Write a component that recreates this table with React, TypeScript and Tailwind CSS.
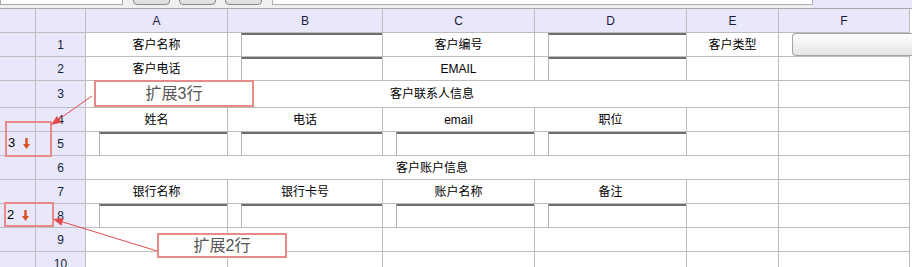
import React from 'react';

const line = 'border-r border-b border-[#bdbdbd]';

function Frozen() {
  return <div className={`${line} bg-[#e8e8fa]`} />;
}

function RowNum({ n }: { n: number }) {
  return (
    <div className={`${line} bg-[#e8e8fa] flex items-center justify-center text-[12px] text-[#1a1a3a]`}>
      {n}
    </div>
  );
}

function Txt({ children, span }: { children?: React.ReactNode; span?: boolean }) {
  return (
    <div className={`${line} bg-white flex items-center justify-center text-[12px] text-black ${span ? 'col-span-5' : ''}`}>
      {children}
    </div>
  );
}

function Inp() {
  return (
    <div className={`${line} bg-white pl-[13px]`}>
      <div className="h-full bg-white border-t-2 border-t-[#6e6e6e] border-l border-l-[#b5b5b5]" />
    </div>
  );
}

function SelectBtn() {
  return (
    <div className={`${line} bg-white pl-[13px] overflow-visible`}>
      <div className="h-full w-[140px] rounded-l-[4px] border border-r-0 border-[#a3a3a3] bg-linear-to-b from-white to-[#e4e4e4]" />
    </div>
  );
}

function DownArrow() {
  return (
    <svg width="7" height="11" viewBox="0 0 7 11">
      <rect x="2.3" y="0" width="2.4" height="7" fill="#d4521c" />
      <polygon points="0,6 7,6 3.5,11" fill="#d4521c" />
    </svg>
  );
}

export default function App() {
  const heads = ['A', 'B', 'C', 'D', 'E', 'F'];

  return (
    <div
      className="relative w-[912px] h-[267px] overflow-hidden bg-white"
      style={{ fontFamily: '"Liberation Sans", "Noto Sans CJK SC", sans-serif' }}
    >
      {/* toolbar strip, mostly scrolled out of view */}
      <div className="h-[8px] overflow-hidden bg-[#f0f0f0]">
        <div className="-mt-[15px] h-[23px] flex items-start">
          <div className="h-[20px] w-[123px] bg-white border border-[#a8a8a8]" />
          <div className="h-[20px] w-[37px] ml-[10px] rounded-[4px] border border-[#8a8a8a] bg-linear-to-b from-white to-[#dcdcdc]" />
          <div className="h-[20px] w-[37px] ml-[9px] rounded-[4px] border border-[#8a8a8a] bg-linear-to-b from-white to-[#dcdcdc]" />
          <div className="h-[20px] w-[37px] ml-[9px] rounded-[4px] border border-[#8a8a8a] bg-linear-to-b from-white to-[#dcdcdc]" />
          <div className="h-[20px] w-[541px] ml-[10px] bg-white border border-[#b0b0b0]" />
          <div className="h-full flex-1 bg-[#e8e8fa]" />
        </div>
      </div>

      <div className="grid grid-cols-[36px_50px_142px_155px_152px_152px_92px_131px] grid-rows-[24px_24px_24px_27px_24px_24px_24px_24px_24px_24px_24px] border-t border-[#a9a9a9]">
        {/* header */}
        <Frozen />
        <div className={`${line} bg-[#e8e8fa]`} />
        {heads.map((h) => (
          <div key={h} className={`${line} bg-[#e8e8fa] flex items-center justify-center text-[12px] text-[#1a1a3a]`}>
            {h}
          </div>
        ))}

        {/* 1 */}
        <Frozen />
        <RowNum n={1} />
        <Txt>客户名称</Txt>
        <Inp />
        <Txt>客户编号</Txt>
        <Inp />
        <Txt>客户类型</Txt>
        <SelectBtn />

        {/* 2 */}
        <Frozen />
        <RowNum n={2} />
        <Txt>客户电话</Txt>
        <Inp />
        <Txt>EMAIL</Txt>
        <Inp />
        <Txt />
        <Txt />

        {/* 3 */}
        <Frozen />
        <RowNum n={3} />
        <Txt span>客户联系人信息</Txt>
        <Txt />

        {/* 4 */}
        <Frozen />
        <RowNum n={4} />
        <Txt>姓名</Txt>
        <Txt>电话</Txt>
        <Txt>email</Txt>
        <Txt>职位</Txt>
        <Txt />
        <Txt />

        {/* 5 */}
        <Frozen />
        <RowNum n={5} />
        <Inp />
        <Inp />
        <Inp />
        <Inp />
        <Txt />
        <Txt />

        {/* 6 */}
        <Frozen />
        <RowNum n={6} />
        <Txt span>客户账户信息</Txt>
        <Txt />

        {/* 7 */}
        <Frozen />
        <RowNum n={7} />
        <Txt>银行名称</Txt>
        <Txt>银行卡号</Txt>
        <Txt>账户名称</Txt>
        <Txt>备注</Txt>
        <Txt />
        <Txt />

        {/* 8 */}
        <Frozen />
        <RowNum n={8} />
        <Inp />
        <Inp />
        <Inp />
        <Inp />
        <Txt />
        <Txt />

        {/* 9, 10 */}
        {[9, 10].map((n) => (
          <React.Fragment key={n}>
            <Frozen />
            <RowNum n={n} />
            <Txt />
            <Txt />
            <Txt />
            <Txt />
            <Txt />
            <Txt />
          </React.Fragment>
        ))}
      </div>

      {/* annotations */}
      <div className="absolute left-[94px] top-[80px] w-[160px] h-[27px] border-2 border-[#e88a8a] bg-white flex items-center justify-center text-[16px] text-[#555]">
        扩展3行
      </div>
      <div className="absolute left-[157px] top-[233px] w-[130px] h-[25px] border-2 border-[#e88a8a] bg-white flex items-center justify-center text-[16px] text-[#555]">
        扩展2行
      </div>
      <div className="absolute left-[5px] top-[121px] w-[47px] h-[36px] border-2 border-[#e88a8a]">
        <div className="flex items-center gap-[8px] pl-[1px] pt-[13px] text-[13px] text-black leading-[14px]">
          <span>3</span>
          <DownArrow />
        </div>
      </div>
      <div className="absolute left-[4px] top-[202px] w-[50px] h-[25px] border-2 border-[#e88a8a]">
        <div className="flex items-center gap-[8px] pl-[1px] pt-[4px] text-[13px] text-black leading-[14px]">
          <span>2</span>
          <DownArrow />
        </div>
      </div>

      <svg className="absolute left-0 top-0 pointer-events-none" width="912" height="267">
        <line x1="92" y1="96" x2="59" y2="119.2" stroke="#e34a4a" strokeWidth="1" />
        <polygon points="51,125 61.5,122.5 56.9,115.9" fill="#e34a4a" />
        <line x1="157" y1="251" x2="62.6" y2="221.9" stroke="#e34a4a" strokeWidth="1" />
        <polygon points="53,219 63.7,218.1 61.4,225.8" fill="#e34a4a" />
      </svg>
    </div>
  );
}
